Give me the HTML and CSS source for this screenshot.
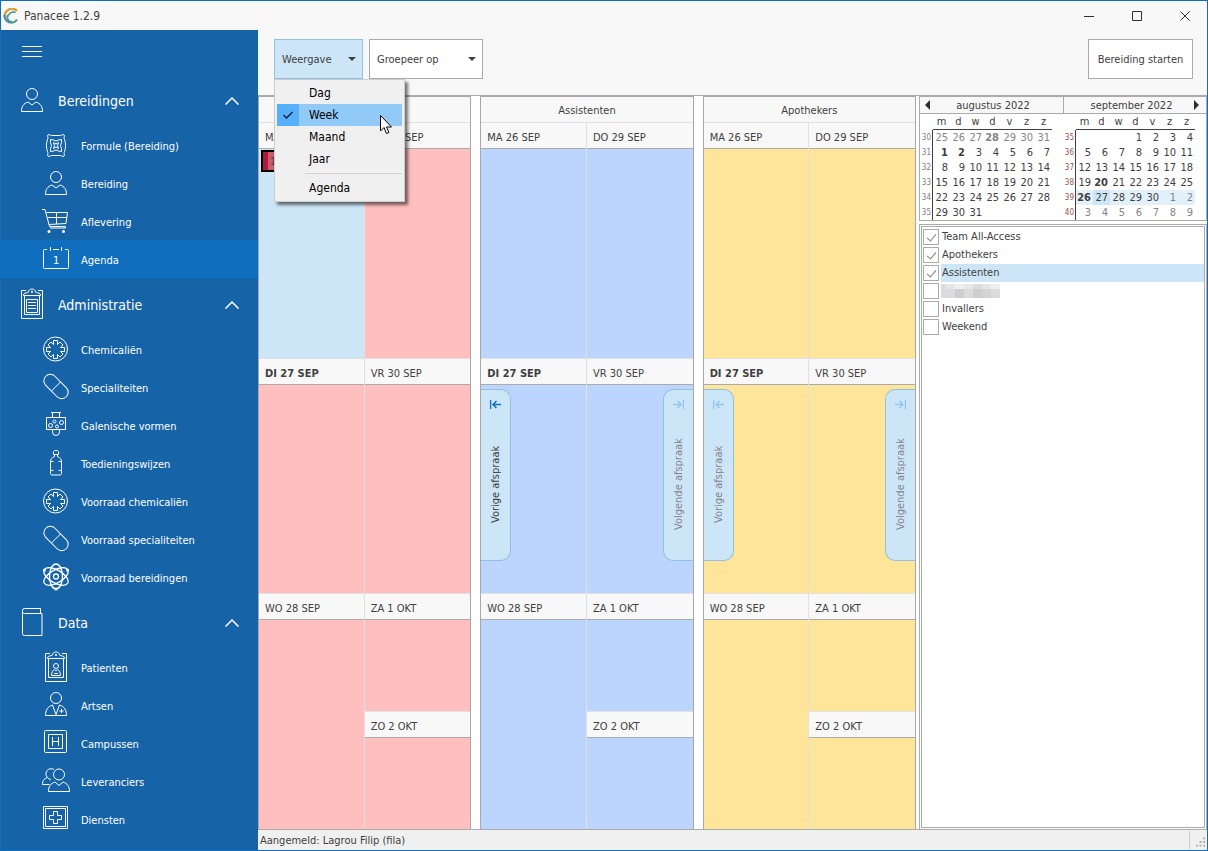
FILE: index.html
```html
<!DOCTYPE html>
<html lang="nl">
<head>
<meta charset="utf-8">
<title>Panacee 1.2.9</title>
<link rel="stylesheet" href="styles.css">
</head>
<body>
<svg class="defs" aria-hidden="true">
  <symbol id="person" viewBox="0 0 28 28"><circle cx="14" cy="8" r="5.5"/><path d="M3.5 25.5h21c0-5-2-8-6.500-9.500L14 19l-4-3c-4.500 1.500-6.500 4.500-6.500 9.500z"/></symbol>
  <symbol id="sack" viewBox="0 0 28 28"><path d="M5.500 4.500c0-1.500 3-.5 4 0h9c1-.5 4-1.500 4 0 0 1.500-1 2 0 4 1.500 4 1.500 8 0 12-1 2 0 2.500 0 4s-3 .5-4 0h-9c-1 .5-4 1.500-4 0 0-1.500 1-2 0-4-1.500-4-1.500-8 0-12 1-2 0-2.500 0-4z"/><path d="M8.500 8.500l3 .5 2.500 1 2.500-1 3-.5v3l-1 3 1 3v3l-3-.5-2.500-1-2.500 1-3 .5v-3l1-3-1-3z"/><path d="M11.500 11.500l2.500 1.500 2.500-1.500-1 3 1 3-2.500-1.500-2.500 1.500 1-3z"/></symbol>
  <symbol id="cart" viewBox="0 0 28 28"><path d="M0 2.500h3l4.500 17h16M4.500 5.500h21l-1.500 11L7 17.500M5.500 10.500h19.500M14.500 5.500v11.500M23.500 19.500v1.500H8"/><circle class="dot" cx="7" cy="24.500" r="1.500"/><circle class="dot" cx="21.500" cy="24.500" r="1.500"/></symbol>
  <symbol id="agenda" viewBox="0 0 28 28"><path d="M5 4.500H2.500a1 1 0 0 0-1 1v17a1 1 0 0 0 1 1h23a1 1 0 0 0 1-1v-17a1 1 0 0 0-1-1H23M8.500 2v4M19.500 2v4M11 4.500h6"/><text x="11" y="19">1</text></symbol>
  <symbol id="clip" viewBox="0 0 28 28"><path d="M8 .5H3.500v28h21V.5H20"/><path d="M6.500 5.500v19h15v-19"/><path d="M5.500 5.500h17c0-3-2-2-5-3.500 0-4-7-4-7 0-3 1.500-5 .5-5 3.500z"/><circle cx="14" cy="2" r=".7"/></symbol>
  <symbol id="clipboard" viewBox="0 0 28 28"><use href="#clip"/><path d="M8.500 9.500h11v13h-11zM10 12.500h8M10 15.500h8M10 18.500h8"/></symbol>
  <symbol id="patient" viewBox="0 0 28 28"><use href="#clip"/><circle cx="14" cy="13" r="2.500"/><path d="M9.500 22.500h9c0-3-1-5-3-6L14 18l-1.500-1.500c-2 1-3 3-3 6zM12 20.500h4"/></symbol>
  <symbol id="star" viewBox="0 0 28 28"><circle cx="13.500" cy="14" r="12"/><path d="M11.500 5.500h4v4l2.500-2.500 3 3-2.500 2.500h4v4h-4l2.500 2.500-3 3-2.500-2.500v4h-4v-4L9 22l-3-3 2.500-2.500h-4v-4h4L6 10l3-3 2.500 2.500z"/></symbol>
  <symbol id="pill" viewBox="0 0 28 28"><rect x="-.5" y="7" width="29" height="13" rx="6.500" transform="rotate(45 14 13.500)"/><path d="M18.500 9l-9 9"/></symbol>
  <symbol id="dosage" viewBox="0 0 28 28"><path d="M4.500 6.500h19v12h-19zM10.500 6V1.500M9 1.500h10M17.500 6V1.500M10.500 19v2a3.500 3.500 0 0 0 7 0v-2"/><circle cx="8.500" cy="14.500" r="2"/><circle cx="12.500" cy="10.500" r="1.500"/><circle cx="15" cy="15.500" r="1.500"/><circle cx="19.500" cy="11.500" r="2"/></symbol>
  <symbol id="bottle" viewBox="0 0 28 28"><path d="M11.500 5.500v-3l1-1h3l1 1v3zM12.500 5.500v2c-3 1.500-4 2.500-4 5v12l1 1.500h9l1-1.500v-12c0-2.500-1-3.500-4-5v-2M8.500 12.500h3M8.500 21.500h3M16.500 12.500h3M16.500 21.500h3"/></symbol>
  <symbol id="atom" viewBox="0 0 28 28"><g stroke-width="1.300"><ellipse cx="14" cy="13.500" rx="6.500" ry="12.500"/><ellipse cx="14" cy="13.500" rx="6.500" ry="13.500" transform="rotate(60 14 13.500)"/><ellipse cx="14" cy="13.500" rx="6.500" ry="13.500" transform="rotate(-60 14 13.500)"/><circle cx="14" cy="13.500" r="2.500"/></g><circle class="dot" cx="2.500" cy="7" r="1.500"/><circle class="dot" cx="25.500" cy="7" r="1.500"/><circle class="dot" cx="14" cy="26" r="1.500"/></symbol>
  <symbol id="book" viewBox="0 0 28 28"><path d="M22.500 5V.5h-16a2 2 0 0 0-2 2v23a2 2 0 0 0 2 2h17.500V5.500H6.500a2 2 0 0 1-2-2.500"/></symbol>
  <symbol id="doctor" viewBox="0 0 28 28"><circle cx="14" cy="7" r="5.500"/><path d="M3.500 24.500h21c0-5-2-9-7-10.500L14 23.500 10.500 14c-5 1.500-7 5.500-7 10.500zM19.500 18v4M17.500 20h4"/></symbol>
  <symbol id="campus" viewBox="0 0 28 28"><rect x="2.500" y="1.500" width="22" height="22" rx="1"/><path d="M6.500 5.500h14v14h-14zM10.500 8v9M16.500 8v9M10.500 12.500h6"/></symbol>
  <symbol id="people" viewBox="0 0 28 28"><circle cx="17" cy="7.500" r="5.500"/><path d="M6.500 24.500h21c0-5-2-8-6.500-9.500l-4 3.500-4-3.500c-4.500 1.500-6.500 4.500-6.500 9.500zM12 2.500c-5-3-11 3-6.500 8C1.500 12 .5 14 .5 17.500h7M6 11l3 2"/></symbol>
  <symbol id="cross" viewBox="0 0 28 28"><path d="M1.500 1.500h24v22h-24z"/><path d="M3.500 3.500h20v18h-20z"/><path d="M11.500 6.500h4v4h4v4h-4v4h-4v-4h-4v-4h4z"/></symbol>
  <symbol id="chev" viewBox="0 0 14 8"><path d="M.5 7.500L7 1l6.500 6.500"/></symbol>
  <symbol id="toPrev" viewBox="0 0 11 9"><path d="M.5 0v9M3 4.500h8M6.500 1L3 4.500 6.500 8"/></symbol>
  <symbol id="toNext" viewBox="0 0 11 9"><path d="M10.500 0v9M8 4.500H0M4.500 1L8 4.500 4.500 8"/></symbol>
</svg>

<div class="window">
  <header class="titlebar">
    <svg class="logo" viewBox="0 0 16 16" aria-hidden="true"><path d="M14 3A7 7 0 0 0 2 9" stroke="#dba23a" stroke-width="2.500"/><path d="M1.500 7a7 7 0 0 0 8 7.500" stroke="#4585c0" stroke-width="2"/><path d="M12.500 4.500a5 5 0 0 0-7 3" stroke="#3a8a90" stroke-width="1.500"/><path d="M5 7a5 5 0 0 0 9 4.500" stroke="#4c9a84" stroke-width="2"/></svg>
    <span class="app-name">Panacee 1.2.9</span>
    <div class="winbtns">
      <button aria-label="Minimaliseren"><svg viewBox="0 0 10 10"><path d="M0 5.500h10"/></svg></button>
      <button aria-label="Maximaliseren"><svg viewBox="0 0 10 10"><path d="M.5.5h9v9h-9z"/></svg></button>
      <button aria-label="Sluiten"><svg viewBox="0 0 10 10"><path d="M.5.5l9 9M9.500.5l-9 9"/></svg></button>
    </div>
  </header>

  <nav class="sidebar">
    <button class="burger" aria-label="Menu"><i></i><i></i><i></i></button>
    <button class="group"><svg class="ico"><use href="#person"/></svg><span>Bereidingen</span><svg class="chev"><use href="#chev"/></svg></button>
    <a class="item" href="#"><svg class="ico"><use href="#sack"/></svg>Formule (Bereiding)</a>
    <a class="item" href="#"><svg class="ico"><use href="#person"/></svg>Bereiding</a>
    <a class="item" href="#"><svg class="ico"><use href="#cart"/></svg>Aflevering</a>
    <a class="item active" href="#"><svg class="ico"><use href="#agenda"/></svg>Agenda</a>
    <button class="group"><svg class="ico"><use href="#clipboard"/></svg><span>Administratie</span><svg class="chev"><use href="#chev"/></svg></button>
    <a class="item" href="#"><svg class="ico"><use href="#star"/></svg>Chemicaliën</a>
    <a class="item" href="#"><svg class="ico"><use href="#pill"/></svg>Specialiteiten</a>
    <a class="item" href="#"><svg class="ico"><use href="#dosage"/></svg>Galenische vormen</a>
    <a class="item" href="#"><svg class="ico"><use href="#bottle"/></svg>Toedieningswijzen</a>
    <a class="item" href="#"><svg class="ico"><use href="#star"/></svg>Voorraad chemicaliën</a>
    <a class="item" href="#"><svg class="ico"><use href="#pill"/></svg>Voorraad specialiteiten</a>
    <a class="item" href="#"><svg class="ico"><use href="#atom"/></svg>Voorraad bereidingen</a>
    <button class="group"><svg class="ico"><use href="#book"/></svg><span>Data</span><svg class="chev"><use href="#chev"/></svg></button>
    <a class="item" href="#"><svg class="ico"><use href="#patient"/></svg>Patienten</a>
    <a class="item" href="#"><svg class="ico"><use href="#doctor"/></svg>Artsen</a>
    <a class="item" href="#"><svg class="ico"><use href="#campus"/></svg>Campussen</a>
    <a class="item" href="#"><svg class="ico"><use href="#people"/></svg>Leveranciers</a>
    <a class="item" href="#"><svg class="ico"><use href="#cross"/></svg>Diensten</a>
  </nav>

  <div class="toolbar">
    <div class="dropdown">
      <button class="btn view open" aria-haspopup="menu" aria-expanded="true"><span>Weergave</span><i class="caret"></i></button>
      <div class="menu" role="menu">
        <button role="menuitem"><span class="tick"></span>Dag</button>
        <button role="menuitem" class="hot"><span class="tick"><svg viewBox="0 0 10 8"><path d="M.5 4l3 3L9.500 1"/></svg></span>Week</button>
        <button role="menuitem"><span class="tick"></span>Maand</button>
        <button role="menuitem"><span class="tick"></span>Jaar</button>
        <hr>
        <button role="menuitem"><span class="tick"></span>Agenda</button>
        <svg class="cursor" viewBox="0 0 12 19" aria-hidden="true"><path d="M.5.5v15.500l3.500-3.500 2.500 6 2.500-1-2.500-5.500h5z"/></svg>
      </div>
    </div>
    <button class="btn by" aria-haspopup="menu"><span>Groepeer op</span><i class="caret"></i></button>
    <button class="btn start">Bereiding starten</button>
  </div>

  <main class="content">
    <div class="calendar">
      <section class="res pink">
        <h2></h2>
        <div class="days">
          <div class="col">
            <div class="day picked"><h3>MA 26 SEP</h3><div class="appt">1</div></div>
            <div class="day"><h3 class="today">DI 27 SEP</h3></div>
            <div class="day"><h3>WO 28 SEP</h3></div>
          </div>
          <div class="col">
            <div class="day"><h3>DO 29 SEP</h3></div>
            <div class="day"><h3>VR 30 SEP</h3></div>
            <div class="day half"><h3>ZA 1 OKT</h3></div>
            <div class="day half"><h3>ZO 2 OKT</h3></div>
          </div>
        </div>
      </section>
      <section class="res blue">
        <h2>Assistenten</h2>
        <div class="days">
          <div class="col">
            <div class="day"><h3>MA 26 SEP</h3></div>
            <div class="day"><h3 class="today">DI 27 SEP</h3></div>
            <div class="day"><h3>WO 28 SEP</h3></div>
          </div>
          <div class="col">
            <div class="day"><h3>DO 29 SEP</h3></div>
            <div class="day"><h3>VR 30 SEP</h3></div>
            <div class="day half"><h3>ZA 1 OKT</h3></div>
            <div class="day half"><h3>ZO 2 OKT</h3></div>
          </div>
          <button class="jump prev"><svg><use href="#toPrev"/></svg><span>Vorige afspraak</span></button>
          <button class="jump next" disabled><svg><use href="#toNext"/></svg><span>Volgende afspraak</span></button>
        </div>
      </section>
      <section class="res yellow">
        <h2>Apothekers</h2>
        <div class="days">
          <div class="col">
            <div class="day"><h3>MA 26 SEP</h3></div>
            <div class="day"><h3 class="today">DI 27 SEP</h3></div>
            <div class="day"><h3>WO 28 SEP</h3></div>
          </div>
          <div class="col">
            <div class="day"><h3>DO 29 SEP</h3></div>
            <div class="day"><h3>VR 30 SEP</h3></div>
            <div class="day half"><h3>ZA 1 OKT</h3></div>
            <div class="day half"><h3>ZO 2 OKT</h3></div>
          </div>
          <button class="jump prev" disabled><svg><use href="#toPrev"/></svg><span>Vorige afspraak</span></button>
          <button class="jump next" disabled><svg><use href="#toNext"/></svg><span>Volgende afspraak</span></button>
        </div>
      </section>
    </div>

    <aside class="side">
      <div class="months">
        <div class="month">
          <div class="mhead"><button class="arrow left" aria-label="Vorige maand"></button><span>augustus 2022</span></div>
          <table id="aug"></table>
        </div>
        <div class="month">
          <div class="mhead"><span>september 2022</span><button class="arrow right" aria-label="Volgende maand"></button></div>
          <table id="sep"></table>
        </div>
      </div>
      <div class="listframe">
        <div class="list">
          <label><input type="checkbox" checked><span>Team All-Access</span></label>
          <label><input type="checkbox" checked><span>Apothekers</span></label>
          <label class="sel"><input type="checkbox" checked><span>Assistenten</span></label>
          <label><input type="checkbox" aria-label="Onleesbare naam"><svg class="mosaic" viewBox="0 0 59 14"><path fill="#dcdce0" d="M0 0h59v14H0z"/><path fill="#e6e6e6" d="M5 0h9v5H5zM23 0h9v5h-9zM41 0h9v5h-9z"/><path fill="#efefef" d="M50 0h9v5h-9zM14 0h9v5h-9z"/><path fill="#cfcecd" d="M14 5h9v9h-9zM32 5h9v9h-9z"/><path fill="#d4d4d4" d="M41 5h9v9h-9z"/></svg></label>
          <label><input type="checkbox"><span>Invallers</span></label>
          <label><input type="checkbox"><span>Weekend</span></label>
        </div>
      </div>
    </aside>
  </main>

  <footer class="status"><span>Aangemeld: Lagrou Filip (fila)</span><svg class="grip" viewBox="0 0 10 10" aria-hidden="true"><path d="M8 0h2v2H8zM4 4h2v2H4zM8 4h2v2H8zM0 8h2v2H0zM4 8h2v2H4zM8 8h2v2H8z"/></svg></footer>
</div>
<script src="app.js"></script>
</body>
</html>
```

FILE: app.js
```js
// Fills a month table: six weeks of [week number, seven days].
// "*" marks bold, "-" a day of a neighbouring month, "w" the shown week, "t" today.
const months = {
  aug: [
    "30 -25 -26 -27 -*28 -29 -30 -31", "31 *1 *2 3 4 5 6 7", "32 8 9 10 11 12 13 14",
    "33 15 16 17 18 19 20 21", "34 22 23 24 25 26 27 28", "35 29 30 31 _ _ _ _"
  ],
  sep: [
    "35 _ _ _ 1 2 3 4", "36 5 6 7 8 9 10 11", "37 12 13 14 15 16 17 18",
    "38 19 *20 21 22 23 24 25", "39 w*26 t27 w28 w29 w30 w-1 w-2", "40 -3 -4 -5 -6 -7 -8 -9"
  ]
};
const marks = { "*": "bold", "-": "other", w: "week", t: "now" };

for (const [id, weeks] of Object.entries(months)) {
  const head = "<thead><tr><td></td>" + [..."mdwdvzz"].map(d => `<th>${d}</th>`).join("") + "</tr></thead>";
  const body = weeks.map(line => {
    const [nr, ...days] = line.split(" ");
    return `<tr><th>${nr}</th>` + days.map(d => {
      const cls = [...d].filter(c => marks[c]).map(c => marks[c]).join(" ");
      return `<td class="${cls}">${d.replace(/\D/g, "")}</td>`;
    }).join("") + "</tr>";
  }).join("");
  document.getElementById(id).innerHTML = head + "<tbody>" + body + "</tbody>";
}
```

FILE: styles.css
```css
* { box-sizing: border-box; }
html, body { height: 100%; margin: 0; }
body, button, input {
  font-family: "DejaVu Sans Condensed", "DejaVu Sans", sans-serif;
  font-size: 11px;
  color: #404040;
}
button { border: 0; padding: 0; background: none; }
h2, h3 { margin: 0; font-size: 11px; font-weight: normal; }
svg { fill: none; display: block; flex: none; }
.defs { display: none; }
symbol { overflow: visible; }

.window {
  display: grid;
  grid-template: 29px 65px minmax(0, 1fr) 20px / 257px minmax(0, 1fr);
  height: 100vh;
  border: 1px solid #106ebe;
  background: #f8f8f8;
}

.titlebar { grid-column: 1 / 3; display: flex; align-items: center; padding-left: 2px; }
.logo { width: 16px; height: 16px; }
.app-name { margin-left: 5px; font-size: 12px; }
.winbtns { display: flex; margin-left: auto; }
.winbtns button { width: 48px; height: 29px; padding-left: 4px; display: grid; place-items: center; }
.winbtns svg { width: 10px; height: 10px; stroke: #303030; }

.sidebar { grid-row: 2 / 5; background: #1763a8; overflow: hidden; }
.burger { display: flex; flex-direction: column; gap: 4px; width: 20px; height: 44px; padding-top: 16px; margin-left: 21px; }
.burger i { height: 1px; background: #fff; }
.sidebar .ico { width: 28px; height: 28px; margin-bottom: 2px; overflow: visible; stroke: #fff; }
symbol text { font: 11px "DejaVu Sans Condensed", sans-serif; fill: #fff; stroke: none; }
.dot { fill: #fff; stroke: none; }
.group { display: flex; align-items: center; width: 100%; height: 52px; padding: 2px 19px 0 17px; gap: 12px; color: #fff; font-size: 14px; }
.chev { width: 14px; height: 8px; margin-left: auto; stroke: #fff; stroke-width: 1.500; }
.item { display: flex; align-items: center; gap: 11px; height: 38px; padding: 2px 0 0 41px; color: #fff; text-decoration: none; }
.active { background: #106ebe; }

.toolbar { display: flex; align-items: flex-start; gap: 6px; padding: 9px 14px 0 16px; }
.dropdown { position: relative; }
.btn { display: flex; align-items: center; justify-content: space-between; height: 40px; padding: 0 6px 0 7px; border: 1px solid #ababab; background: #fff; }
.view { width: 89px; }
.by { width: 114px; }
.start { width: 105px; margin-left: auto; padding: 0; justify-content: center; }
.open { background: #cde6f7; border-color: #92c0e0; }
.caret { border: 4px solid transparent; border-top-color: #404040; border-bottom: 0; }

.menu { position: absolute; z-index: 5; top: 40px; left: 0; width: 131px; padding: 2px; border: 1px solid #ccc; background: #f0f0f0; box-shadow: 3px 3px 3px #0008; }
.menu button { display: flex; align-items: center; gap: 10px; width: 100%; height: 22px; font-size: 12px; color: #000; }
.tick { display: grid; place-items: center; width: 22px; height: 22px; }
.tick svg { width: 10px; height: 8px; stroke: #202040; stroke-width: 1.500; }
.menu .hot { background: #91c9f7; }
.hot .tick { background: #56b0fa; }
.menu hr { height: 1px; margin: 3px 0 3px 28px; border: 0; background: #d0d0d0; }
.cursor { position: absolute; top: 35px; left: 105px; width: 12px; height: 19px; }
.cursor path { fill: #fff; stroke: #000; }

.content { display: flex; gap: 3px; border-top: 1px solid #ababab; border-bottom: 1px solid #ababab; background: #fff; }
.calendar { flex: 1; display: grid; grid-template-columns: repeat(3, minmax(0, 1fr)); gap: 9px; }
.res { display: flex; flex-direction: column; border: 1px solid #a8a8a8; border-bottom: 0; }
.res h2 { height: 25px; padding-top: 7px; text-align: center; background: #f8f8f8; }
.days { position: relative; flex: 1; display: grid; grid-template-columns: repeat(2, minmax(0, 1fr)); }
.col { display: flex; flex-direction: column; border-right: 1px solid #e1e1e1; }
.col + .col { border-right: 0; }
.day { flex: 2 1 0; display: flex; flex-direction: column; }
.half { flex-grow: 1; }
.day h3 { height: 27px; padding: 8px 6px 0; white-space: nowrap; background: #f8f8f8; border-top: 1px solid #e1e1e1; border-bottom: 1px solid #ababab; }
.day .today { font-weight: bold; }
.pink { background: #ffbfbf; }
.blue { background: #bcd5ff; }
.yellow { background: #ffe599; }
.picked { background: #cde6f7; }
.appt { height: 22px; margin: 1px 2px; padding: 3px 7px; border: 2px solid #000; background: linear-gradient(90deg, #b0183c 5px, #c85c70 5px); }

.jump { position: absolute; top: 50%; margin-top: -87px; width: 30px; height: 172px; display: flex; flex-direction: column; align-items: center; padding-top: 10px; background: #cde6f7; border: 1px solid #92c0e0; }
.jump svg { width: 11px; height: 9px; stroke: #106ebe; stroke-width: 1.500; }
.jump span { flex: 1; display: flex; align-items: center; justify-content: center; writing-mode: vertical-rl; rotate: 180deg; }
.prev { left: 0; border-left: 0; border-radius: 0 10px 10px 0; }
.next { right: 0; border-right: 0; border-radius: 10px 0 0 10px; }
.jump:disabled { color: #848490; }
.jump:disabled svg { stroke: #92c5ec; }

.side { display: flex; flex-direction: column; gap: 3px; width: 288px; }
.months { display: grid; grid-template-columns: 1fr 1fr; border: 1px solid #ababab; background: #fff; }
.mhead { display: flex; align-items: center; height: 17px; padding: 0 7px 0 5px; background: #f8f8f8; border-bottom: 1px solid #ababab; }
.mhead span { flex: 1; text-align: center; }
.month + .month .mhead { border-left: 1px solid #ababab; }
.arrow { border: 5px solid transparent; }
.left { border-right-color: #303030; border-left: 0; }
.right { border-left-color: #303030; border-right: 0; }
.month table { table-layout: fixed; width: 132px; border-collapse: separate; border-spacing: 0; }
.month td, .month th { height: 15px; padding: 0 2px 0 0; line-height: 15px; font-weight: normal; text-align: right; }
.month thead td { width: 13px; }
.month thead th { height: 16px; padding: 0; text-align: center; border-bottom: 1px solid #404040; }
.month tbody th { padding: 0 1px 0 0; font-size: 8px; color: #808080; border-right: 1px solid #404040; }
#sep tbody th { color: #a05050; }
.month .bold { font-weight: bold; }
.month .other { color: #848484; }
.month .week { background: #e2f0fa; }
.month .now { background: #cde6f7; }

.listframe { flex: 1; display: flex; padding: 1px; border: 1px solid #ababab; border-bottom: 0; }
.list { flex: 1; padding: 1px 0 1px 1px; border: 1px solid #ababab; background: #fff; }
.list label { display: flex; align-items: center; gap: 2px; height: 18px; }
.list input { appearance: none; width: 16px; height: 16px; margin: 0; border: 1px solid #ababab; background: #fff; display: grid; place-items: center; }
.list input:checked::before { content: ""; width: 4px; height: 8px; margin-bottom: 2px; border: solid #808080; border-width: 0 1px 1px 0; rotate: 40deg; }
.list span { flex: 1; padding: 0 1px; line-height: 18px; }
.sel span { background: #cde6f7; }
.mosaic { width: 59px; height: 14px; }

.status { display: flex; align-items: center; justify-content: space-between; padding: 0 0 0 2px; background: #f0f0f0; }
.grip { width: 18px; height: 18px; padding: 6px 2px 2px 6px; border-left: 1px solid #d0d0d0; fill: #ababab; }
```
